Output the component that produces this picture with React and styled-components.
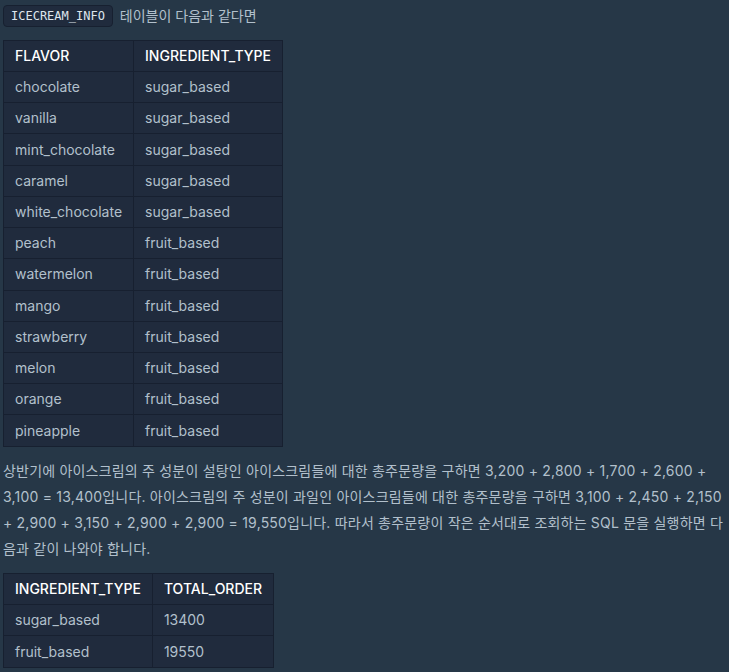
import React from "react";
import styled, { createGlobalStyle } from "styled-components";

const Global = createGlobalStyle`
  html, body { margin: 0; padding: 0; background: #263747; }
  body { font-family: Inter, "Noto Sans CJK KR", sans-serif; }
`;

const Page = styled.div`
  min-height: 672px;
  padding: 3px 4px 0 3px;
  box-sizing: border-box;
  color: #b2c0cc;
  font-size: 14px;
`;

const Para = styled.p`
  margin: 0 0 11px;
  line-height: 26px;
  letter-spacing: ${(p) => (p.$wide ? "0.2px" : "0")};
`;

const Code = styled.code`
  font-family: "DejaVu Sans Mono", monospace;
  font-size: 12px;
  line-height: 14px;
  color: #dfe6ed;
  background: #202b3d;
  border: 1px solid #172030;
  border-radius: 4px;
  padding: 3px 7px;
  margin-right: 3px;
  display: inline-block;
  vertical-align: 1px;
`;

const Table = styled.table`
  border-collapse: collapse;
  background: #202b3d;
  border: 1px solid #172030;
  margin: 0 0 11px;
`;

const Th = styled.th`
  text-align: left;
  font-weight: 500;
  color: #ffffff;
  padding: 6px 11px;
  line-height: 18px;
  border: 1px solid #172030;
  white-space: nowrap;
`;

const Td = styled.td`
  color: #b2c0cc;
  padding: ${(p) => (p.$tall ? "6.4px" : "6.12px")} 11px;
  line-height: 18px;
  border: 1px solid #172030;
  white-space: nowrap;
`;

const flavors = [
  ["chocolate", "sugar_based"],
  ["vanilla", "sugar_based"],
  ["mint_chocolate", "sugar_based"],
  ["caramel", "sugar_based"],
  ["white_chocolate", "sugar_based"],
  ["peach", "fruit_based"],
  ["watermelon", "fruit_based"],
  ["mango", "fruit_based"],
  ["strawberry", "fruit_based"],
  ["melon", "fruit_based"],
  ["orange", "fruit_based"],
  ["pineapple", "fruit_based"],
];

const totals = [
  ["sugar_based", "13400"],
  ["fruit_based", "19550"],
];

export default function App() {
  return (
    <Page>
      <Global />
      <Para>
        <Code>ICECREAM_INFO</Code> 테이블이 다음과 같다면
      </Para>
      <Table>
        <thead>
          <tr>
            <Th>FLAVOR</Th>
            <Th>INGREDIENT_TYPE</Th>
          </tr>
        </thead>
        <tbody>
          {flavors.map(([f, t]) => (
            <tr key={f}>
              <Td>{f}</Td>
              <Td>{t}</Td>
            </tr>
          ))}
        </tbody>
      </Table>
      <Para $wide>
        상반기에 아이스크림의 주 성분이 설탕인 아이스크림들에 대한 총주문량을 구하면 3,200 + 2,800 + 1,700 + 2,600 + 3,100 = 13,400입니다. 아이스크림의 주 성분이 과일인 아이스크림들에 대한 총주문량을 구하면 3,100 + 2,450 + 2,150 + 2,900 + 3,150 + 2,900 + 2,900 = 19,550입니다. 따라서 총주문량이 작은 순서대로 조회하는 SQL 문을 실행하면 다음과 같이 나와야 합니다.
      </Para>
      <Table>
        <thead>
          <tr>
            <Th>INGREDIENT_TYPE</Th>
            <Th>TOTAL_ORDER</Th>
          </tr>
        </thead>
        <tbody>
          {totals.map(([t, n]) => (
            <tr key={t}>
              <Td $tall>{t}</Td>
              <Td $tall>{n}</Td>
            </tr>
          ))}
        </tbody>
      </Table>
    </Page>
  );
}
